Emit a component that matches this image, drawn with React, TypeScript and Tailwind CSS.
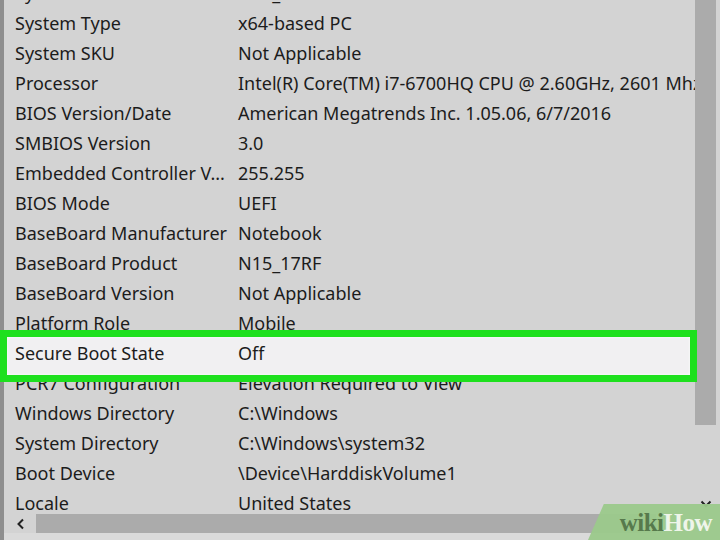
import React from "react";

type Row = { label: string; value: string };

const rows: Row[] = [
  { label: "System Model", value: "N15_17RF" },
  { label: "System Type", value: "x64-based PC" },
  { label: "System SKU", value: "Not Applicable" },
  { label: "Processor", value: "Intel(R) Core(TM) i7-6700HQ CPU @ 2.60GHz, 2601 Mhz, 4 Core(s)" },
  { label: "BIOS Version/Date", value: "American Megatrends Inc. 1.05.06, 6/7/2016" },
  { label: "SMBIOS Version", value: "3.0" },
  { label: "Embedded Controller V...", value: "255.255" },
  { label: "BIOS Mode", value: "UEFI" },
  { label: "BaseBoard Manufacturer", value: "Notebook" },
  { label: "BaseBoard Product", value: "N15_17RF" },
  { label: "BaseBoard Version", value: "Not Applicable" },
  { label: "Platform Role", value: "Mobile" },
  { label: "Secure Boot State", value: "Off" },
  { label: "PCR7 Configuration", value: "Elevation Required to View" },
  { label: "Windows Directory", value: "C:\\Windows" },
  { label: "System Directory", value: "C:\\Windows\\system32" },
  { label: "Boot Device", value: "\\Device\\HarddiskVolume1" },
  { label: "Locale", value: "United States" },
];

export default function App() {
  return (
    <div
      className="relative h-[540px] w-[720px] overflow-hidden bg-[#d3d3d3] text-[#1c1c1c]"
      style={{ fontFamily: '"Noto Sans", "Open Sans", sans-serif' }}
    >
      {/* selected row fill, sits under the text */}
      <div className="absolute left-[7px] top-[337px] z-0 h-[38px] w-[683px] bg-[#f1f0f2]" />

      <div className="relative z-10 flex h-[514px]">
        {/* list */}
        <div className="h-full flex-1 overflow-hidden border-l-[4px] border-[#8e8e8e]">
          <div className="-mt-[22px] flex flex-col">
            {rows.map((row) => (
              <div
                key={row.label}
                className="flex h-[30.06px] items-center whitespace-nowrap text-[18px]"
              >
                <span className="w-[234px] shrink-0 pl-[11px]">{row.label}</span>
                <span>{row.value}</span>
              </div>
            ))}
          </div>
        </div>
        {/* vertical scrollbar */}
        <div className="flex w-[25px] shrink-0 flex-col bg-[#d3d3d3]">
          <div className="h-[425px] w-[21px] bg-[#ababab]" />
          <div className="flex flex-1 flex-col items-center justify-end pb-[6px]">
            <svg width="12" height="8" viewBox="0 0 12 8" className="mr-[4px]">
              <path d="M1.5 1.5 L6 6 L10.5 1.5" fill="none" stroke="#222" strokeWidth="2" />
            </svg>
          </div>
        </div>
      </div>
      {/* horizontal scrollbar */}
      <div className="flex h-[19px] items-center border-l-[4px] border-[#8e8e8e]">
        <svg width="10" height="12" viewBox="0 0 10 12" className="ml-[12px] mr-[10px]">
          <path d="M7 1.5 L2.5 6 L7 10.5" fill="none" stroke="#222" strokeWidth="2" />
        </svg>
        <div className="h-full w-[620px] bg-[#ababab]" />
      </div>
      <div className="h-[7px] border-l-[4px] border-[#8e8e8e] bg-[#dadada]" />

      {/* green highlight box over the selected row */}
      <div className="pointer-events-none absolute left-0 top-[330px] z-20 h-[52px] w-[697px] border-[7px] border-[#1ee01e] shadow-[inset_0_0_3px_rgba(255,255,255,0.9)]" />

      {/* watermark */}
      <div className="absolute bottom-0 right-0 z-30 flex h-[36px] w-[132px] items-center justify-end rounded-tl-[6px] bg-[#9bc98b]/95 pr-[8px] [clip-path:polygon(12%_0,100%_0,100%_100%,0_100%)]">
        <span
          className="text-[25px] font-bold leading-none tracking-[-0.5px]"
          style={{ fontFamily: '"Liberation Serif", "DejaVu Serif", serif' }}
        >
          <span className="text-[#577a4c]">wiki</span>
          <span className="text-[#eef5ea]">How</span>
        </span>
      </div>
    </div>
  );
}
